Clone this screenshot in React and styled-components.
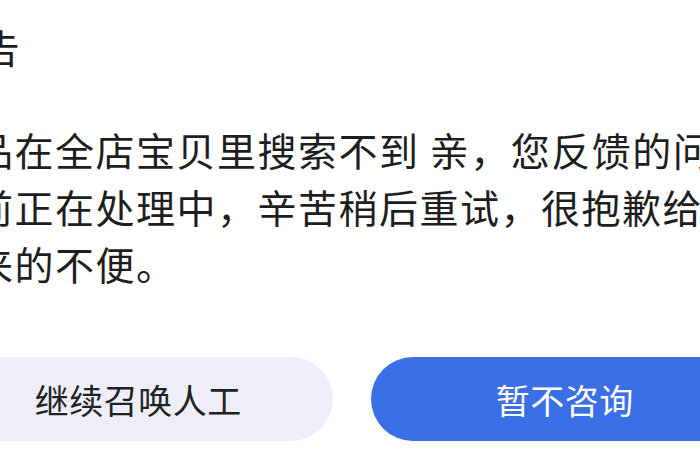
import * as React from 'react';
import styled, { createGlobalStyle } from 'styled-components';

const GlobalStyle = createGlobalStyle`
	html, body {
		margin: 0;
		padding: 0;
		background: #fff;
		overflow: hidden;
	}
	body {
		font-family: "Noto Sans CJK SC", "Noto Sans", sans-serif;
		color: #1c1c1c;
	}
`;

const Viewport = styled.div`
	width: 700px;
	height: 470px;
	overflow: hidden;
	background: #fff;
`;

// the dialog is wider than the shot, its left edge sits off screen
const Dialog = styled.div`
	box-sizing: border-box;
	width: 815px;
	margin-left: -56px;
	padding-top: 21px;
	display: flex;
	flex-direction: column;
`;

const Title = styled.h3`
	margin: 0 0 0 -4px;
	font-size: 39px;
	font-weight: 400;
	letter-spacing: 1.5px;
	line-height: 50px;
	white-space: nowrap;
`;

const Message = styled.p`
	width: 830px;
	margin: 50px 0 0;
	padding: 0 0 0 30px;
	font-size: 39px;
	letter-spacing: 1.5px;
	line-height: 57px;
	color: #1e1e1e;
`;

const Actions = styled.div`
	display: flex;
	gap: 38px;
	margin-top: 65px;
`;

const Button = styled.button`
	flex: 1;
	height: 84px;
	border: none;
	border-radius: 42px;
	font-family: inherit;
	font-size: 34px;
	letter-spacing: 0.5px;
	cursor: pointer;
	background: ${(p) => (p.$primary ? '#3b6fe6' : '#eeeef8')};
	color: ${(p) => (p.$primary ? '#fff' : '#222')};
`;

const App = () => {
	return (
		<Viewport>
			<GlobalStyle />
			<Dialog>
				<Title>公告</Title>
				<Message>
					品在全店宝贝里搜索不到 亲，您反馈的问题目前正在处理中，辛苦稍后重试，很抱歉给您带来的不便。
				</Message>
				<Actions>
					<Button>继续召唤人工</Button>
					<Button $primary>暂不咨询</Button>
				</Actions>
			</Dialog>
		</Viewport>
	);
};

export default App;
